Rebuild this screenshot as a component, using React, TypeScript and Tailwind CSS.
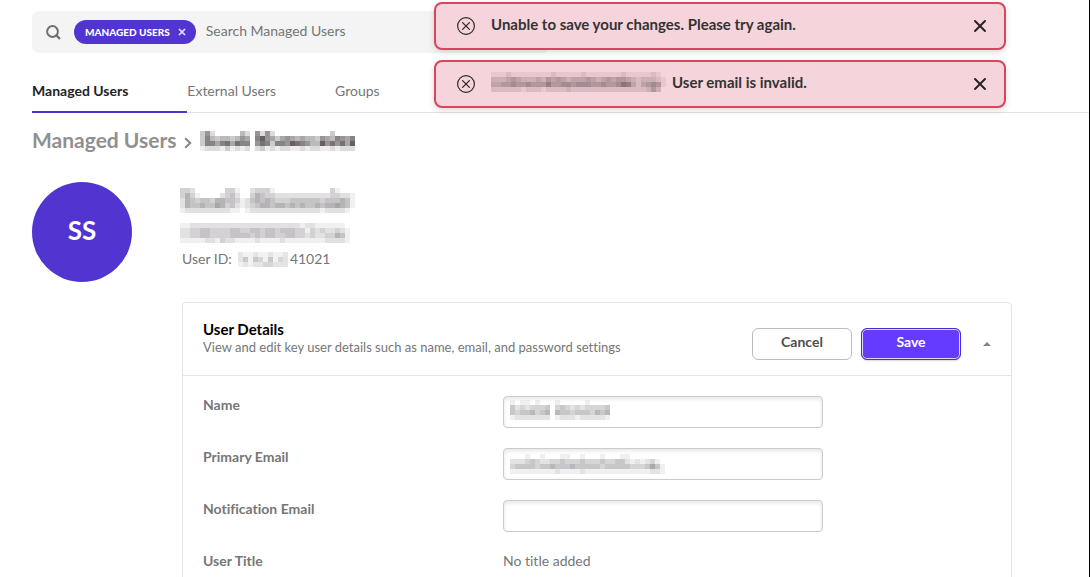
import React, { useState } from "react";

const FONT = "font-[Lato,'Open_Sans',sans-serif] [font-variant-ligatures:none]";

type MosaicProps = {
  rows: string[];
  cell?: number;
  color: string;
  className?: string;
};

// Censor blocks: each digit is the darkness of one square, 0 being clear.
function Mosaic({ rows, cell = 5, color, className = "" }: MosaicProps) {
  const width = rows[0].length * cell;
  const height = rows.length * cell;
  return (
    <svg
      width={width}
      height={height}
      viewBox={`0 0 ${width} ${height}`}
      shapeRendering="crispEdges"
      aria-hidden="true"
      className={`block shrink-0 ${className}`}
    >
      {rows.flatMap((row, y) =>
        row.split("").map((value, x) => (
          <rect
            key={`${x}-${y}`}
            x={x * cell}
            y={y * cell}
            width={cell}
            height={cell}
            fill={color}
            fillOpacity={Number(value) / 10}
          />
        )),
      )}
    </svg>
  );
}

const CRUMB_NAME = [
  "3620000042062620000000000030000",
  "3743443465079653565454436547657",
  "3775785877068737769876449686859",
  "1222131212023121221121221121222",
];

const PROFILE_NAME = [
  "332000000331002333100000000000310000",
  "353100002342003543322222222222332210",
  "254344355443124545433344444434445410",
  "254454465342123455455454544545565410",
  "122222222211012222222222222212222100",
];

const PROFILE_EMAIL = [
  "1122222222222222222222221221111110",
  "2233443333443344344344433132322321",
  "2233443333444434344334433232233541",
  "1111122132211112111121111111122221",
];

const USER_ID = [
  "2112112112",
  "2414314132",
  "1212233222",
];

const TOAST_EMAIL = [
  "11121111111121111121111111211111210",
  "33345433343545434445434545543233321",
  "44556556555755665666556556874245651",
  "22222212221222232222222222222223530",
];

const INPUT_NAME = [
  "101101000100000100000",
  "423233340343232333340",
  "434453450544344435450",
  "122222220122212222210",
];

const INPUT_EMAIL = [
  "0001001000110010001000110000000",
  "2223432233433343334334421212310",
  "3444434454445444443444443334641",
  "1111111112111121111111111111221",
];

function Toast({ children, onClose }: { children: React.ReactNode; onClose: () => void }) {
  return (
    <div
      role="alert"
      className="flex h-12 items-center rounded-lg border-2 border-[#d9455f] bg-[#f6d4db] pr-4 pl-[21px] shadow-[0_2px_6px_rgba(0,0,0,0.15)]"
    >
      <svg width="18" height="18" viewBox="0 0 18 18" fill="none" stroke="#2b2b2b" aria-hidden="true" className="shrink-0">
        <circle cx="9" cy="9" r="8.4" strokeWidth="1.2" />
        <path d="M5.6 5.6l6.8 6.8M12.4 5.6l-6.8 6.8" strokeWidth="1.3" strokeLinecap="round" />
      </svg>
      <div className="ml-4 flex grow items-center pb-1 text-[15px] leading-5 font-bold text-[#333]">{children}</div>
      <button type="button" aria-label="Close" onClick={onClose} className="flex size-4 items-center justify-center">
        <svg width="12" height="12" viewBox="0 0 12 12" fill="none" stroke="#222" strokeWidth="1.9" strokeLinecap="round" aria-hidden="true">
          <path d="M1 1l10 10M11 1L1 11" />
        </svg>
      </button>
    </div>
  );
}

type FieldProps = { id: string; label: string; children?: React.ReactNode };

function Field({ id, label, children }: FieldProps) {
  return (
    <div className="flex h-8">
      <label htmlFor={id} className="w-[300px] shrink-0 text-sm leading-[18px] font-bold text-[#767676]">
        {label}
      </label>
      <div className="relative w-80">
        <input
          id={id}
          type="text"
          className="h-8 w-full rounded border border-[#ccc] bg-white px-2 text-sm text-[#555] shadow-[inset_0_2px_4px_rgba(0,0,0,0.1)] outline-none"
        />
        {children}
      </div>
    </div>
  );
}

export default function App() {
  const [saveError, setSaveError] = useState(true);
  const [emailError, setEmailError] = useState(true);

  return (
    <div className={`relative min-h-screen overflow-hidden border-r border-black bg-white pl-8 text-sm text-[#767676] ${FONT}`}>
      <div className="pt-[11px]">
        <div className="flex h-[42px] max-w-[518px] items-center rounded-lg bg-[#f4f4f4] pl-3.5">
          <svg width="15" height="15" viewBox="0 0 15 15" fill="none" stroke="#6f6f6f" strokeWidth="2" aria-hidden="true" className="shrink-0">
            <circle cx="6.5" cy="6.5" r="5.4" />
            <path d="M10.4 10.4L14 14" strokeWidth="2.2" />
          </svg>
          <span className="ml-[13px] flex h-6 shrink-0 items-center rounded-full bg-[#5235d0] pr-2.5 pl-[11px] pb-px text-[10px] leading-4 font-black text-white">
            MANAGED USERS
            <button type="button" aria-label="Remove filter" className="ml-2 flex items-center">
              <svg width="8" height="8" viewBox="0 0 8 8" fill="none" stroke="#e4dfff" strokeWidth="1.7" aria-hidden="true">
                <path d="M1 1l6 6M7 1L1 7" />
              </svg>
            </button>
          </span>
          <input
            type="text"
            aria-label="Search Managed Users"
            placeholder="Search Managed Users"
            className="ml-2.5 w-full min-w-0 bg-transparent pb-0.5 text-sm placeholder-[#767676] outline-none"
          />
        </div>
      </div>

      <nav className="mt-[17px] flex h-[43px] border-b border-[#e2e2e2] text-sm leading-5">
        <a href="#managed" className="h-[43px] border-b-2 border-[#5235d0] pt-[11px] pr-[59px] font-bold text-[#222]">
          Managed Users
        </a>
        <a href="#external" className="pt-[11px] pr-[59px]">External Users</a>
        <a href="#groups" className="pt-[11px]">Groups</a>
      </nav>

      <div className="mt-4 flex h-6 items-center">
        <a href="#managed" className="pb-0.5 text-[21px] leading-6 font-bold text-[#909090]">Managed Users</a>
        <svg width="8" height="12" viewBox="0 0 8 12" fill="none" stroke="#858585" strokeWidth="2" aria-hidden="true" className="mt-1 ml-2">
          <path d="M1.2 1.2L6.2 6l-5 4.8" />
        </svg>
        <Mosaic rows={CRUMB_NAME} color="#554f50" className="ml-2" />
      </div>

      <div className="mt-[29px] flex">
        <div className="flex size-[100px] shrink-0 items-center justify-center rounded-full bg-[#5235d0] pb-0.5 text-[26px] font-bold text-white">
          SS
        </div>
        <div className="ml-12 pt-1.5">
          <Mosaic rows={PROFILE_NAME} color="#6e6870" />
          <Mosaic rows={PROFILE_EMAIL} color="#6e6870" className="mt-2.5" />
          <div className="mt-1.5 flex h-5 items-center pl-0.5">
            <span>User ID:</span>
            <Mosaic rows={USER_ID} color="#777" className="mr-0.5 ml-1.5" />
            <span>41021</span>
          </div>
        </div>
      </div>

      <section className="mt-5 mr-[77px] ml-[150px] rounded border border-[#e4e4e4]">
        <header className="flex h-[73px] items-center border-b border-[#e4e4e4] pr-5 pl-5">
          <div className="grow pb-0.5">
            <h2 className="text-[15px] leading-[18px] font-bold text-black">User Details</h2>
            <p className="text-[13px] leading-[18px]">View and edit key user details such as name, email, and password settings</p>
          </div>
          <div className="flex items-center pt-2.5">
            <button type="button" className="h-8 w-[100px] rounded-md border border-[#bcbcbc] bg-white pb-1 text-sm font-bold text-[#4e4e4e]">
              Cancel
            </button>
            <button
              type="button"
              className="ml-[9px] h-8 w-[100px] rounded-md border border-[#4a31c4] bg-[#643bff] pb-1 text-sm font-bold text-white shadow-[inset_0_0_0_1px_rgba(255,255,255,0.8),0_1px_2px_rgba(0,0,0,0.15)]"
            >
              Save
            </button>
            <button type="button" aria-label="Collapse" className="ml-[22px] flex">
              <svg width="8" height="4" viewBox="0 0 8 4" fill="#858585" aria-hidden="true">
                <path d="M0 4l4-4 4 4z" />
              </svg>
            </button>
          </div>
        </header>

        <div className="flex flex-col gap-5 p-5">
          <Field id="name" label="Name">
            <Mosaic rows={INPUT_NAME} color="#737078" className="pointer-events-none absolute top-1 left-[7px]" />
          </Field>
          <Field id="primary-email" label="Primary Email">
            <Mosaic rows={INPUT_EMAIL} color="#737078" className="pointer-events-none absolute top-1.5 left-[7px]" />
          </Field>
          <Field id="notification-email" label="Notification Email" />
          <div className="flex h-8 leading-[18px]">
            <span className="w-[300px] shrink-0 font-bold">User Title</span>
            <span>No title added</span>
          </div>
        </div>
      </section>

      <div className="absolute top-0.5 right-[83px] flex w-[572px] max-w-full flex-col gap-2.5">
        {saveError && <Toast onClose={() => setSaveError(false)}>Unable to save your changes. Please try again.</Toast>}
        {emailError && (
          <Toast onClose={() => setEmailError(false)}>
            <Mosaic rows={TOAST_EMAIL} color="#6d5a60" />
            <span className="ml-1.5">User email is invalid.</span>
          </Toast>
        )}
      </div>
    </div>
  );
}
